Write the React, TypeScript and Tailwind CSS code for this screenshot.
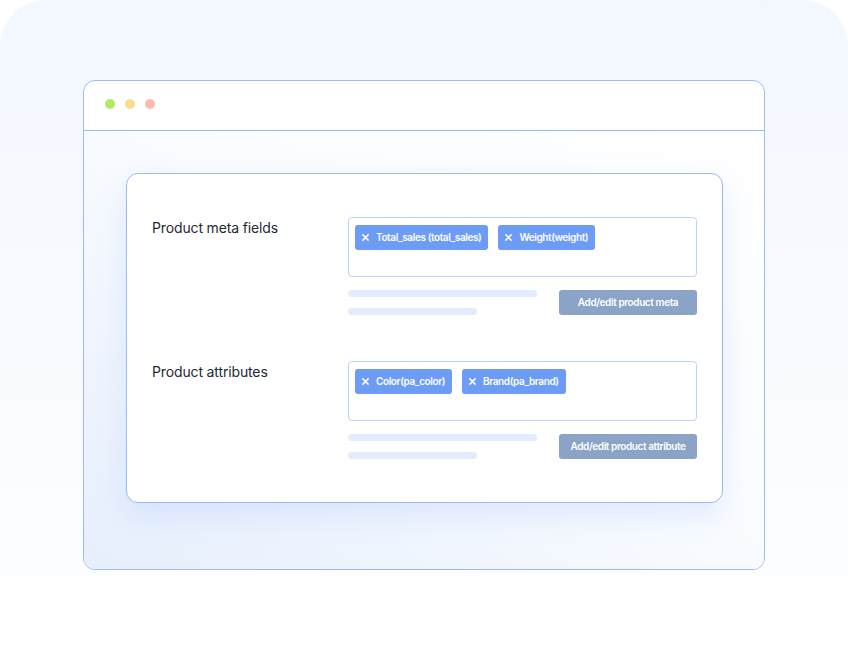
const font = { fontFamily: "Inter, 'Noto Sans', sans-serif" };

function XIcon() {
  return (
    <svg width="7" height="7" viewBox="0 0 8 8" fill="none" className="shrink-0">
      <path d="M1 1L7 7M7 1L1 7" stroke="white" strokeWidth="1.7" strokeLinecap="round" />
    </svg>
  );
}

function Tag({ label }: { label: string }) {
  return (
    <div className="flex h-[25px] items-center gap-[7px] rounded-[3px] bg-[#6c9cf5] px-[7px] text-[10px] font-semibold tracking-[-0.04em] text-white">
      <XIcon />
      <span>{label}</span>
    </div>
  );
}

function FieldRow({ title, tags, button }: { title: string; tags: string[]; button: string }) {
  return (
    <div className="flex">
      <div className="w-[196px] shrink-0 pt-[1px] text-[14px] leading-5 tracking-[-0.01em] text-[#242a33]">{title}</div>
      <div className="flex-1">
        <div className="flex h-[60px] items-start gap-[10px] rounded-[4px] border border-[#bcd2fb] px-[6px] pt-[7px]">
          {tags.map((t) => (
            <Tag key={t} label={t} />
          ))}
        </div>
        <div className="mt-[13px] flex items-start justify-between">
          <div className="flex flex-col gap-[11px]">
            <div className="h-[7px] w-[189px] rounded-full bg-[#e3ecfd]" />
            <div className="h-[7px] w-[129px] rounded-full bg-[#e3ecfd]" />
          </div>
          <div className="flex h-[25px] w-[138px] items-center justify-center rounded-[3px] bg-[#8ca3c8] text-[10px] font-semibold tracking-[-0.04em] text-white">
            {button}
          </div>
        </div>
      </div>
    </div>
  );
}

export default function App() {
  return (
    <div className="h-[647px] w-[848px] bg-white" style={font}>
      <div className="h-full rounded-t-[46px] bg-linear-to-b from-[#f3f8ff] via-[#f9fbff] via-60% to-white pl-[83px] pt-[80px]">
        <div className="flex h-[490px] w-[682px] flex-col overflow-hidden rounded-[12px] border-[1.5px] border-[#98b9fa] bg-white">
          <div className="flex h-[50px] shrink-0 items-center gap-[10px] border-b-[1.5px] border-[#98b9fa] pb-[3px] pl-[21px]">
            <span className="h-[10px] w-[10px] rounded-full bg-[#b4e963]" />
            <span className="h-[10px] w-[10px] rounded-full bg-[#f8dc90]" />
            <span className="h-[10px] w-[10px] rounded-full bg-[#ffb9ae]" />
          </div>
          <div className="flex-1 bg-linear-to-tr from-[#e6effd] via-[#fafcff] via-55% to-white pl-[42px] pt-[42px]">
            <div className="flex w-[597px] flex-col gap-[46px] rounded-[12px] border-[1.5px] border-[#98b9fa] bg-white pb-[43px] pl-[25px] pr-[25px] pt-[43px] shadow-[0_12px_30px_rgba(140,175,250,0.22)]">
              <FieldRow
                title="Product meta fields"
                tags={["Total_sales (total_sales)", "Weight(weight)"]}
                button="Add/edit product meta"
              />
              <FieldRow
                title="Product attributes"
                tags={["Color(pa_color)", "Brand(pa_brand)"]}
                button="Add/edit product attribute"
              />
            </div>
          </div>
        </div>
      </div>
    </div>
  );
}
